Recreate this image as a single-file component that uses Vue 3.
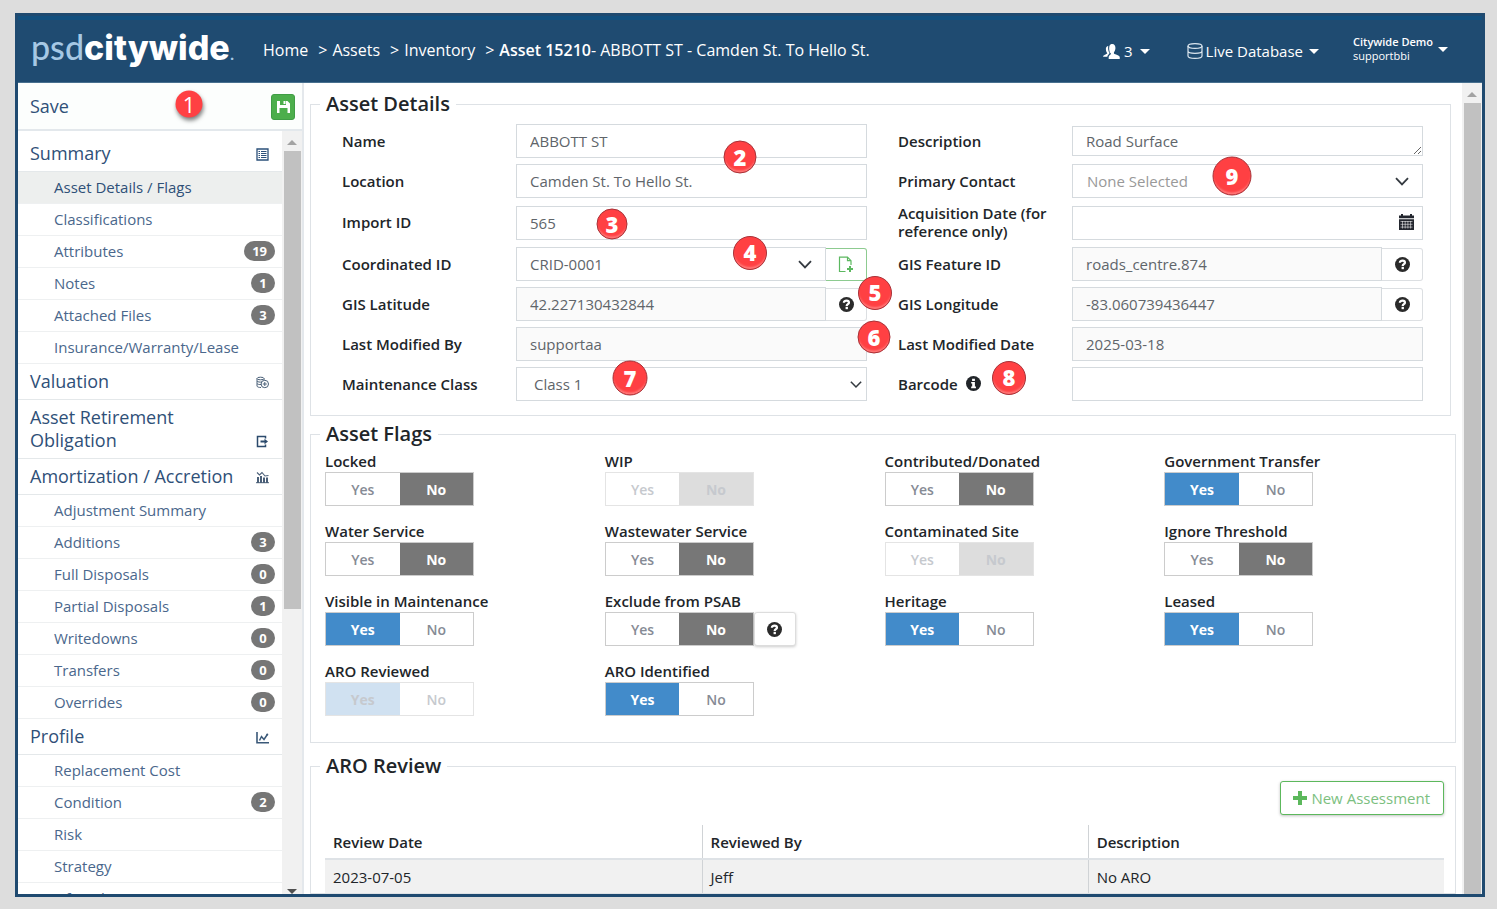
<script setup>
const crumbs = ['Home', 'Assets', 'Inventory']

const menu = [
  { title: 'Summary', icon: 'list', items: [
    { label: 'Asset Details / Flags', active: true },
    { label: 'Classifications' },
    { label: 'Attributes', count: 19 },
    { label: 'Notes', count: 1 },
    { label: 'Attached Files', count: 3 },
    { label: 'Insurance/Warranty/Lease' },
  ] },
  { title: 'Valuation', icon: 'coins', items: [] },
  { title: 'Asset Retirement Obligation', icon: 'exit', items: [] },
  { title: 'Amortization / Accretion', icon: 'bars', items: [
    { label: 'Adjustment Summary' },
    { label: 'Additions', count: 3 },
    { label: 'Full Disposals', count: 0 },
    { label: 'Partial Disposals', count: 1 },
    { label: 'Writedowns', count: 0 },
    { label: 'Transfers', count: 0 },
    { label: 'Overrides', count: 0 },
  ] },
  { title: 'Profile', icon: 'chart', items: [
    { label: 'Replacement Cost' },
    { label: 'Condition', count: 2 },
    { label: 'Risk' },
    { label: 'Strategy' },
    { label: 'Lifecycle Quantities' },
  ] },
]

const fields = [
  { id: 'name', label: 'Name', kind: 'text', value: 'ABBOTT ST' },
  { id: 'description', label: 'Description', kind: 'area', value: 'Road Surface' },
  { id: 'location', label: 'Location', kind: 'text', value: 'Camden St. To Hello St.' },
  { id: 'contact', label: 'Primary Contact', kind: 'select', value: 'None Selected', tone: 'muted' },
  { id: 'import', label: 'Import ID', kind: 'text', value: '565' },
  { id: 'acquired', label: 'Acquisition Date (for reference only)', kind: 'date', value: '' },
  { id: 'coordinated', label: 'Coordinated ID', kind: 'select', value: 'CRID-0001', addon: 'add' },
  { id: 'gisid', label: 'GIS Feature ID', kind: 'text', value: 'roads_centre.874', readonly: true, addon: 'help' },
  { id: 'lat', label: 'GIS Latitude', kind: 'text', value: '42.227130432844', readonly: true, addon: 'help' },
  { id: 'lng', label: 'GIS Longitude', kind: 'text', value: '-83.060739436447', readonly: true, addon: 'help' },
  { id: 'modby', label: 'Last Modified By', kind: 'text', value: 'supportaa', readonly: true },
  { id: 'moddate', label: 'Last Modified Date', kind: 'text', value: '2025-03-18', readonly: true },
  { id: 'mclass', label: 'Maintenance Class', kind: 'select', value: 'Class 1', tone: 'native' },
  { id: 'barcode', label: 'Barcode', kind: 'text', value: '', info: true },
]

const flags = [
  { label: 'Locked', on: false },
  { label: 'WIP', on: false, disabled: true },
  { label: 'Contributed/Donated', on: false },
  { label: 'Government Transfer', on: true },
  { label: 'Water Service', on: false },
  { label: 'Wastewater Service', on: false },
  { label: 'Contaminated Site', on: false, disabled: true },
  { label: 'Ignore Threshold', on: false },
  { label: 'Visible in Maintenance', on: true },
  { label: 'Exclude from PSAB', on: false, help: true },
  { label: 'Heritage', on: true },
  { label: 'Leased', on: true },
  { label: 'ARO Reviewed', on: true, disabled: true },
  { label: 'ARO Identified', on: true },
]

const pins = [
  { n: 1, x: 189, y: 104, d: 27 },
  { n: 2, x: 740, y: 157, d: 33 },
  { n: 3, x: 612, y: 224, d: 31 },
  { n: 4, x: 750, y: 253, d: 34 },
  { n: 5, x: 875, y: 293, d: 34 },
  { n: 6, x: 874, y: 337, d: 33 },
  { n: 7, x: 630, y: 378, d: 35 },
  { n: 8, x: 1009, y: 378, d: 34 },
  { n: 9, x: 1232, y: 176, d: 39 },
]
const pinStyle = (p) => ({
  left: `${p.x}px`,
  top: `${p.y}px`,
  width: `${p.d}px`,
  height: `${p.d}px`,
})
</script>

<template>
  <div class="page">
    <div class="frame">
      <header class="topbar">
        <a href="#" class="logo"><span class="logo-light">psd</span><span class="logo-bold">citywide</span><span class="logo-dot">.</span></a>
        <nav class="crumbs" aria-label="Breadcrumb">
          <template v-for="c in crumbs" :key="c">
            <a href="#">{{ c }}</a><span class="sep">&gt;</span>
          </template>
          <span class="current"><b>Asset 15210</b>- ABBOTT ST - Camden St. To Hello St.</span>
        </nav>
        <button class="top-btn users" type="button">
          <svg width="17" height="15" viewBox="0 0 18 16" fill="#fff">
            <path d="M7 1.500C7.800.4 8.800 0 9.800 0 12.200 0 13.200 1.900 13.200 4.300 13.200 6.300 12.400 7.800 11.600 8.800V10.200C13 11.500 17 11.800 17.800 13.800V16H6V13.500C6.500 12 8 11.500 8.500 10.500 7 9 6.500 7 6.500 4.700 6.500 3.500 6.600 2.400 7 1.500Z" />
            <path d="M5.500 2C5.200 4 5.300 7.500 7 9.500 6.500 10.800 4.800 11.500 4.500 13.500H0C.3 11.500 3.500 11.200 4.500 9.800 3.500 8.500 3 7 3 5 3 3.500 4 2 5.500 2Z" />
          </svg>
          <span>3</span>
          <i class="caret"></i>
        </button>
        <button class="top-btn database" type="button">
          <svg width="16" height="16" viewBox="0 0 16 16" fill="none" stroke="#dbe6ef" stroke-width="1.2">
            <ellipse cx="8" cy="3" rx="7" ry="2.400" />
            <path d="M1 3V13C1 14.300 4 15.400 8 15.400S15 14.300 15 13V3M1 8C1 9.300 4 10.300 8 10.300S15 9.300 15 8" />
          </svg>
          <span>Live Database</span>
          <i class="caret"></i>
        </button>
        <button class="top-btn account" type="button">
          <span class="who"><b>Citywide Demo</b><span>supportbbi</span></span>
          <i class="caret"></i>
        </button>
      </header>

      <div class="body">
        <aside class="side">
          <div class="save-row">
            <span>Save</span>
            <button class="save-btn" type="button" aria-label="Save">
              <svg width="13" height="12" viewBox="0 0 13 12">
                <path fill="#fff" fill-rule="evenodd" d="M0 0H3V4H9V0H10.500L13 2.500V12H10.500V7H2.500V12H0ZM6.500 0H8.500V3H6.500Z" />
              </svg>
            </button>
          </div>
          <div class="side-scroll">
            <nav class="menu" aria-label="Asset sections">
              <section v-for="g in menu" :key="g.title">
                <a href="#" class="group">
                  <span>{{ g.title }}</span>
                  <svg v-if="g.icon === 'list'" width="13" height="13" viewBox="0 0 13 13" fill="none" stroke="#2b5079">
                    <path d="M1 1H12V12H1Z" stroke-width="1.300" />
                    <path d="M2.500 3.500H4M5 3.500H10.500M2.500 5.500H4M5 5.500H10.500M2.500 7.500H4M5 7.500H10.500M2.500 9.500H4M5 9.500H10.500" />
                  </svg>
                  <svg v-else-if="g.icon === 'coins'" width="13" height="13" viewBox="0 0 13 13" fill="none" stroke="#4a6078">
                    <ellipse cx="4.500" cy="2.500" rx="3.500" ry="1.300" />
                    <path d="M1 2.500V10C1 11 3 11.500 5 11.500M1 5C1.500 6 4 6.300 6 6M1 7.500C1.500 8.300 3.500 8.700 5 8.500M8 2.500V4" />
                    <circle cx="8.800" cy="8" r="3.700" />
                    <path d="M8.800 6V10M6.800 8H10.800" />
                  </svg>
                  <svg v-else-if="g.icon === 'exit'" width="13" height="13" viewBox="0 0 13 13" fill="none" stroke="#2b4a6c">
                    <path d="M9.500 3.500V1.500H1.500V11.500H9.500V9.500" stroke-width="1.500" />
                    <path d="M4.500 6.500H9" stroke-width="2" />
                    <path d="M8.500 3.800L12 6.500 8.500 9.200Z" fill="#2b4a6c" stroke="none" />
                  </svg>
                  <svg v-else-if="g.icon === 'bars'" width="13" height="13" viewBox="0 0 13 13" fill="none" stroke="#4a5f78">
                    <path d="M1 1.500L3.500 4 6 1.500 9 5 12.500 4.500" stroke-width="1.100" />
                    <path d="M2 6V12M5 5V12M8 6.500V12M11 6.500V12" stroke-width="2" />
                    <path d="M0 11.700H13" />
                  </svg>
                  <svg v-else width="13" height="13" viewBox="0 0 13 13" fill="none" stroke="#3a5878">
                    <path d="M1 1V11.700H13" stroke-width="1.600" />
                    <path d="M3.500 9.500L5.500 5.500 8 8.500 11.300 3.500" stroke-width="1.500" />
                    <circle cx="11.300" cy="3.500" r="1" fill="#3a5878" stroke="none" />
                  </svg>
                </a>
                <a v-for="i in g.items" :key="i.label" href="#" class="item" :class="{ active: i.active }">
                  <span>{{ i.label }}</span>
                  <span v-if="i.count !== undefined" class="count">{{ i.count }}</span>
                </a>
              </section>
            </nav>
            <div class="bar">
              <i class="up"></i>
              <div class="thumb side-thumb"></div>
              <i class="down"></i>
            </div>
          </div>
        </aside>

        <main class="content">
          <fieldset class="panel details">
            <legend>Asset Details</legend>
            <div class="form">
              <div v-for="f in fields" :key="f.id" class="field">
                <label :for="f.id">{{ f.label }}<svg v-if="f.info" class="info" width="15" height="15" viewBox="0 0 16 16"><circle cx="8" cy="8" r="8" fill="#212529" /><path fill="#fff" d="M6.500 2.800H9.500V5.200H6.500ZM5.500 6.300H9.500V11.200H10.600V13H5.500V11.200H6.600V8.100H5.500Z" /></svg></label>
                <div class="control">
                  <textarea v-if="f.kind === 'area'" :id="f.id" rows="1" :value="f.value"></textarea>
                  <div v-else-if="f.kind === 'select'" class="select-wrap">
                    <select :id="f.id" :class="f.tone"><option>{{ f.value }}</option></select>
                    <svg class="chev" :class="f.tone" width="14" height="9" viewBox="0 0 14 9" fill="none" stroke="#343a40" stroke-width="1.800"><path d="M1 1.200L7 7.400 13 1.200" /></svg>
                  </div>
                  <div v-else-if="f.kind === 'date'" class="select-wrap">
                    <input :id="f.id" type="text" :value="f.value">
                    <svg class="cal" width="15" height="16" viewBox="0 0 15 16">
                      <path fill="#23262e" d="M0 1.500H2V0H4V1.500H11V0H13V1.500H15V4.200H0ZM0 5.200H15V16H0Z" />
                      <path stroke="#fff" stroke-width=".9" fill="none" d="M1.500 7.500H13.500M1.500 10.300H13.500M1.500 13.100H13.500M3.500 7V14.500M6.200 7V14.500M8.900 7V14.500M11.600 7V14.500" opacity=".6" />
                    </svg>
                  </div>
                  <input v-else :id="f.id" type="text" :value="f.value" :readonly="f.readonly">
                  <button v-if="f.addon === 'help'" type="button" class="addon" aria-label="Help">
                    <svg width="15" height="15" viewBox="0 0 16 16"><circle cx="8" cy="8" r="8" fill="#2b2b2b" /><path fill="none" stroke="#fff" stroke-width="2.400" d="M5.200 6.200C5.200 4.400 6.500 3.900 8 3.900S10.600 4.600 10.600 6C10.600 7.600 8.200 7.700 8.200 9.500" /><path fill="#fff" d="M7 10.500H9.500V13H7Z" /></svg>
                  </button>
                  <button v-if="f.addon === 'add'" type="button" class="addon green" aria-label="Add coordinated ID">
                    <svg width="16" height="17" viewBox="0 0 16 17" fill="none" stroke="#5cb860" stroke-width="1.200"><path d="M7.500 15.500H1.500V1.200H9.500L13 4.700V9M9.500 1.200V4.700H13" /><path d="M12 10V16M9 13H15" stroke-width="2" /></svg>
                  </button>
                </div>
              </div>
            </div>
          </fieldset>

          <fieldset class="panel flags">
            <legend>Asset Flags</legend>
            <div class="flag-grid">
              <div v-for="f in flags" :key="f.label" class="flag">
                <div class="flag-label">{{ f.label }}</div>
                <div class="flag-row">
                  <div class="toggle" role="group" :aria-label="f.label" :class="{ disabled: f.disabled }">
                    <button type="button" :class="{ yes: f.on }" :aria-pressed="f.on" :disabled="f.disabled">Yes</button>
                    <button type="button" :class="{ no: !f.on }" :aria-pressed="!f.on" :disabled="f.disabled">No</button>
                  </div>
                  <button v-if="f.help" type="button" class="flag-help" aria-label="Help">
                    <svg width="15" height="15" viewBox="0 0 16 16"><circle cx="8" cy="8" r="8" fill="#2b2b2b" /><path fill="none" stroke="#fff" stroke-width="2.400" d="M5.200 6.200C5.200 4.400 6.500 3.900 8 3.900S10.600 4.600 10.600 6C10.600 7.600 8.200 7.700 8.200 9.500" /><path fill="#fff" d="M7 10.500H9.500V13H7Z" /></svg>
                  </button>
                </div>
              </div>
            </div>
          </fieldset>

          <fieldset class="panel review">
            <legend>ARO Review</legend>
            <div class="review-actions">
              <button type="button" class="new-btn">
                <svg width="14" height="14" viewBox="0 0 14 14"><path fill="#5cb85c" d="M5 0H9V5H14V9H9V14H5V9H0V5H5Z" /></svg>
                New Assessment
              </button>
            </div>
            <table>
              <thead>
                <tr><th class="c1">Review Date</th><th class="c2">Reviewed By</th><th>Description</th></tr>
              </thead>
              <tbody>
                <tr><td>2023-07-05</td><td>Jeff</td><td>No ARO</td></tr>
              </tbody>
            </table>
          </fieldset>
        </main>
        <div class="bar">
          <i class="up"></i>
          <div class="thumb"></div>
        </div>
      </div>
    </div>
    <span v-for="p in pins" :key="p.n" class="pin" :class="{ plain: p.n === 1 }" :style="pinStyle(p)">{{ p.n }}</span>
  </div>
</template>

<style>
body {
  background: #ddd;
}
</style>

<style scoped>
* {
  box-sizing: border-box;
}
.page {
  position: relative;
  height: 100vh;
  padding: 13px 12px 12px 15px;
  overflow: hidden;
  font-family: "Open Sans", "Noto Sans", sans-serif;
  font-size: 15px;
  color: #212529;
}
button, input, select, textarea {
  font: inherit;
  margin: 0;
}
a {
  color: inherit;
  text-decoration: none;
}
svg {
  display: block;
  flex: none;
}
.frame {
  height: 100%;
  display: flex;
  flex-direction: column;
  background: #fff;
  border: 3px solid #1f4a70;
  overflow: hidden;
}
.topbar {
  flex: none;
  height: 67px;
  display: flex;
  align-items: center;
  padding-left: 13px;
  background: #1f4b71;
  border-top: 4px solid #12507f;
  border-bottom: 1px solid #48708f;
  color: #fff;
}
.logo {
  width: 232px;
  padding-bottom: 4px;
  font-family: Lato, "Open Sans", sans-serif;
  font-size: 34px;
  line-height: 40px;
  white-space: nowrap;
}
.logo-light {
  color: #a6c8e4;
  font-weight: 500;
}
.logo-bold {
  font-family: Inter, "Open Sans", sans-serif;
  font-weight: 800;
}
.logo-dot {
  color: #a6c8e4;
  font-size: 20px;
}
.crumbs {
  flex: 1;
  display: flex;
  padding-bottom: 3px;
  font-size: 16px;
  white-space: nowrap;
}
.crumbs b {
  font-weight: 600;
}
.sep {
  margin: 0 5px 0 10px;
}
.top-btn {
  display: flex;
  align-items: center;
  border: 0;
  padding: 0;
  background: none;
  color: #fff;
  text-align: left;
}
.users {
  gap: 4px;
  margin-right: 37px;
}
.database {
  gap: 3px;
  margin-right: 34px;
}
.account {
  gap: 5px;
  margin-right: 34px;
  padding-bottom: 4px;
}
.caret {
  border: 5px solid transparent;
  border-top-color: #fff;
  border-bottom: 0;
  margin-left: 3px;
}
.account .caret {
  margin-left: 0;
}
.who {
  display: flex;
  flex-direction: column;
  font-size: 11px;
  line-height: 14px;
}
.who b {
  font-weight: 600;
}
.body {
  flex: 1;
  min-height: 0;
  display: flex;
}
.side {
  flex: none;
  width: 286px;
  display: flex;
  flex-direction: column;
  border-right: 2px solid #e4e8ec;
  color: #2f5078;
}
.save-row {
  flex: none;
  height: 48px;
  display: flex;
  align-items: center;
  justify-content: space-between;
  padding: 0 7px 0 12px;
  font-size: 18px;
  background: #fcfefd;
  border-bottom: 2px solid #e3e8ec;
}
.save-btn {
  width: 24px;
  height: 26px;
  display: grid;
  place-items: center;
  margin-top: 2px;
  padding: 0;
  background: #4cae4c;
  border: 1px solid #3f9d45;
  border-radius: 3px;
}
.side-scroll {
  flex: 1;
  min-height: 0;
  display: flex;
}
.menu {
  flex: 1;
  padding-top: 5px;
  overflow: hidden;
}
.group {
  display: flex;
  align-items: flex-end;
  justify-content: space-between;
  padding: 6px 13px 6px 12px;
  border-bottom: 1px solid #e4e8ea;
  font-size: 18px;
  line-height: 23px;
}
.group svg {
  margin-bottom: 4px;
}
.item {
  height: 32px;
  display: flex;
  align-items: center;
  justify-content: space-between;
  padding: 0 7px 2px 36px;
  border-bottom: 1px solid #eef0f1;
  color: #4a678c;
}
.item.active {
  background: #edefee;
  color: #2f5078;
}
.count {
  min-width: 24px;
  padding: 0 8px;
  border-radius: 10px;
  background: #767676;
  color: #fff;
  font-size: 13px;
  font-weight: 700;
  line-height: 20px;
  text-align: center;
}
.bar {
  flex: none;
  width: 20px;
  display: flex;
  flex-direction: column;
  align-items: center;
  background: #f1f1f1;
  overflow: hidden;
}
.up {
  margin: 9px 0 6px;
  border: 5px solid transparent;
  border-bottom-color: #a3a3a3;
  border-top: 0;
}
.down {
  flex: none;
  margin-top: auto;
  border: 5px solid transparent;
  border-top-color: #505050;
  border-bottom: 0;
}
.thumb {
  flex: 1;
  width: 17px;
  background: #c1c1c1;
}
.side-thumb {
  flex: 0 0 60%;
}
.content {
  flex: 1;
  min-width: 0;
  padding: 9px 6px 0;
  overflow: hidden;
}
.panel {
  min-width: 0;
  margin: 0;
  border: 1px solid #dee2e6;
  padding: 0 11px 0 14px;
}
legend {
  margin-left: -5px;
  padding: 0 6px;
  font-size: 20px;
  font-weight: 600;
  line-height: 24px;
}
.details {
  margin: 0 5px 6px 0;
  padding: 8px 27px 14px 31px;
}
.details legend {
  margin-left: -22px;
}
.form {
  display: grid;
  grid-template-columns: 1fr 1fr;
  gap: 6px 31px;
}
.field {
  display: flex;
  align-items: center;
}
.field label {
  flex: none;
  display: flex;
  align-items: center;
  width: 174px;
  padding: 0 20px 1px 0;
  font-weight: 600;
  line-height: 18px;
}
.info {
  margin-left: 8px;
}
.control {
  flex: 1;
  min-width: 0;
  display: flex;
  align-items: center;
}
input, select, textarea {
  width: 100%;
  height: 34px;
  padding: 0 13px;
  border: 1px solid #d5dade;
  border-radius: 0;
  background: #fff;
  color: #60656a;
  outline: 0;
}
input[readonly] {
  background: #fafafa;
}
textarea {
  display: block;
  height: 30px;
  line-height: 20px;
  padding-top: 4px;
  padding-bottom: 4px;
  resize: vertical;
  overflow: hidden;
}
.select-wrap {
  position: relative;
  flex: 1;
  min-width: 0;
}
select {
  appearance: none;
}
select.muted {
  padding-left: 14px;
  color: #999;
}
select.native {
  padding-left: 17px;
}
.chev {
  position: absolute;
  right: 14px;
  top: 13px;
}
.chev.native {
  right: 5px;
  width: 12px;
}
.cal {
  position: absolute;
  right: 9px;
  top: 8px;
}
.addon {
  flex: none;
  width: 41px;
  height: 33px;
  display: grid;
  place-items: center;
  padding: 0;
  border: 1px solid #dcdfe2;
  border-left: 0;
  border-radius: 0 3px 3px 0;
  background: #fff;
}
.addon.green {
  border: 1px solid #8dcb90;
  border-left: 0;
}
.flags {
  margin-bottom: 11px;
  padding-top: 6px;
  padding-bottom: 10px;
}
.flag-grid {
  display: grid;
  grid-template-columns: repeat(4, 1fr);
}
.flag {
  padding-bottom: 16px;
}
.flag-label {
  padding-bottom: 2px;
  font-weight: 600;
  line-height: 18px;
}
.flag-row {
  display: flex;
  align-items: center;
}
.toggle {
  display: flex;
  height: 34px;
  width: 149px;
  border: 1px solid #ccc;
  background: #fff;
}
.toggle button {
  flex: 1;
  padding: 0;
  border: 0;
  background: none;
  color: #868b95;
  font-size: 14px;
  font-weight: 600;
}
.toggle .yes {
  background: #428bca;
  color: #fff;
  font-weight: 700;
}
.toggle .no {
  background: #777;
  color: #fff;
  font-weight: 700;
}
.toggle.disabled {
  border-color: #e4e4e4;
}
.toggle.disabled button {
  color: #c6c9ce;
}
.toggle.disabled .yes {
  background: #d0e1f1;
}
.toggle.disabled .no {
  background: #ddd;
}
.flag-help {
  width: 42px;
  height: 34px;
  display: grid;
  place-items: center;
  padding: 0;
  border: 1px solid #ddd;
  border-radius: 3px;
  background: #fff;
  box-shadow: 0 1px 3px rgba(0, 0, 0, .2);
}
.review-actions {
  display: flex;
  justify-content: flex-end;
  padding: 3px 0 10px;
}
.new-btn {
  height: 34px;
  display: flex;
  align-items: center;
  gap: 4px;
  padding: 0 13px 0 12px;
  border: 1px solid #5cb85c;
  border-radius: 3px;
  background: #fff;
  color: #7cc080;
  box-shadow: 0 1px 3px rgba(0, 0, 0, .25);
}
table {
  width: 100%;
  border-collapse: collapse;
  table-layout: fixed;
}
th, td {
  height: 34px;
  padding: 0 8px;
  border-right: 1px solid #d0d3d6;
  text-align: left;
}
th:last-child, td:last-child {
  border-right: 0;
}
th {
  border-bottom: 2px solid #dee2e6;
  font-weight: 600;
}
td {
  background: #f1f1f1;
}
.c1 {
  width: 33.7%;
}
.c2 {
  width: 34.5%;
}
.pin {
  position: absolute;
  display: grid;
  place-items: center;
  transform: translate(-50%, -50%);
  padding-bottom: 2px;
  border: 1px solid #a83238;
  border-radius: 50%;
  background: #ff4043;
  box-shadow: inset 0 -3px 2px -1px #ff7a7a;
  color: #fff;
  font-size: 22px;
  font-weight: 800;
  line-height: 24px;
}
.pin.plain {
  border: 0;
  box-shadow: 1px 3px 4px rgba(0, 0, 0, .5);
  font-weight: 400;
}
</style>
